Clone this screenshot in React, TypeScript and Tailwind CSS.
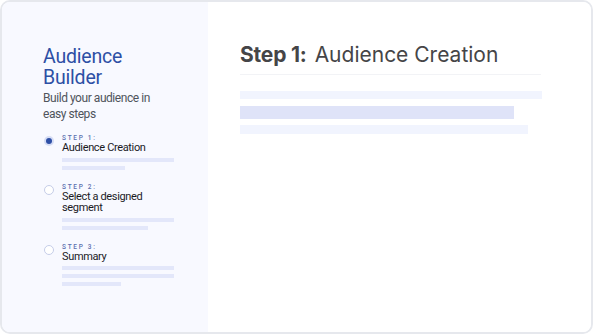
import React from "react";

const Bar = ({ w }: { w: string }) => <div className={`h-[4px] bg-[#e3e7fa] ${w}`} />;

function Step({
  label,
  name,
  active,
  bars,
  className,
}: {
  label: string;
  name: React.ReactNode;
  active?: boolean;
  bars: string[];
  className?: string;
}) {
  return (
    <div className={`flex ${className ?? ""}`}>
      <div className="w-[10px] mt-[2px] mr-[8px] ml-[1px]">
        {active ? (
          <div className="w-[10px] h-[10px] rounded-full bg-[#d6ddf5] flex items-center justify-center">
            <div className="w-[6px] h-[6px] rounded-full bg-[#2e4fa6]" />
          </div>
        ) : (
          <div className="w-[10px] h-[10px] rounded-full border border-[#c5cde8] bg-white" />
        )}
      </div>
      <div className="flex flex-col">
        <div className="text-[6.5px] leading-[8px] tracking-[1.7px] text-[#5b6fae] font-medium">{label}</div>
        <div className="text-[11px] leading-[11.5px] text-[#1b1b1f] tracking-[-0.35px]">{name}</div>
        <div className="flex flex-col gap-[4px] mt-[4px]">
          {bars.map((b, i) => (
            <Bar key={i} w={b} />
          ))}
        </div>
      </div>
    </div>
  );
}

export default function App() {
  return (
    <div className="w-[594px] h-[335px] bg-white" style={{ fontFamily: "Inter, 'Noto Sans', sans-serif" }}>
      <div className="w-[593px] h-[334px] border-2 border-[#e6e8ed] rounded-[10px] overflow-hidden flex">
        <div
          className="w-[206px] h-full bg-[#f8f9ff] pl-[41px] pt-[44px] flex flex-col"
          style={{ fontFamily: "Roboto, 'Noto Sans', sans-serif" }}
        >
          <div className="text-[19.5px] leading-[21px] text-[#2d4fa5] tracking-[-0.2px]">
            Audience
            <br />
            Builder
          </div>
          <div className="mt-[2px] text-[12px] leading-[16px] text-[#4f545c] tracking-[-0.45px]">
            Build your audience in
            <br />
            easy steps
          </div>
          <Step className="mt-[12px]" label="STEP 1:" name="Audience Creation" active bars={["w-[112px]", "w-[63px]"]} />
          <Step
            className="mt-[13px]"
            label="STEP 2:"
            name={
              <>
                Select a designed
                <br />
                segment
              </>
            }
            bars={["w-[112px]", "w-[86px]"]}
          />
          <Step className="mt-[13px]" label="STEP 3:" name="Summary" bars={["w-[112px]", "w-[112px]", "w-[59px]"]} />
        </div>
        <div className="flex-1 bg-white pl-[32px] pt-[39px] flex flex-col">
          <div className="w-[301px] border-b border-[#f2f3f6] pb-[5px] text-[21px] leading-[28px] text-[#454547] whitespace-nowrap">
            <span className="font-bold tracking-[-0.2px]">Step 1:</span>
            <span className="ml-[8px] tracking-[0px]">Audience Creation</span>
          </div>
          <div className="mt-[16px] h-[8px] w-[302px] bg-[#f1f4fe]" />
          <div className="mt-[7px] h-[13px] w-[274px] bg-[#dfe3f8]" />
          <div className="mt-[6px] h-[9px] w-[288px] bg-[#f1f4fe]" />
        </div>
      </div>
    </div>
  );
}
